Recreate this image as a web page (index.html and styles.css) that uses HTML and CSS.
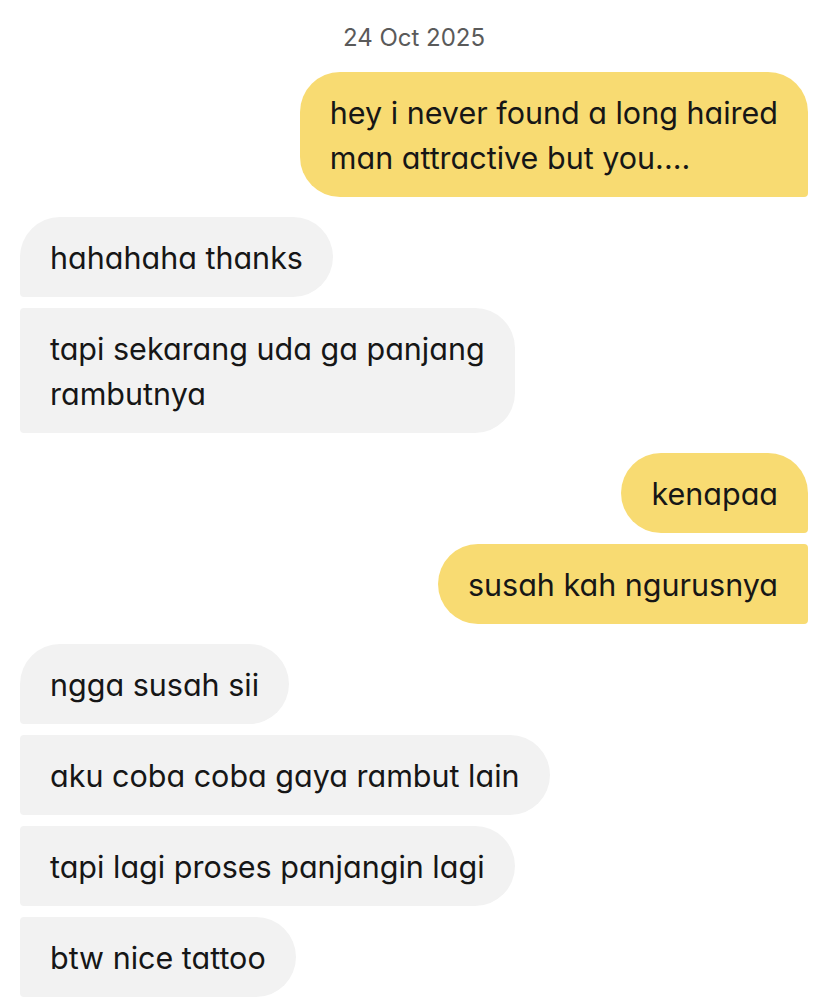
FILE: index.html
```html
<!DOCTYPE html>
<html lang="id">
<head>
<meta charset="utf-8">
<title>Chat</title>
<link rel="stylesheet" href="styles.css">
</head>
<body>
<main class="chat">
  <div class="date">24 Oct 2025</div>

  <div class="group sent">
    <div class="bubble first last">hey i never found a long haired<br>man attractive but you....</div>
  </div>

  <div class="group received">
    <div class="bubble first">hahahaha thanks</div>
    <div class="bubble last">tapi sekarang uda ga panjang<br>rambutnya</div>
  </div>

  <div class="group sent">
    <div class="bubble first">kenapaa</div>
    <div class="bubble last">susah kah ngurusnya</div>
  </div>

  <div class="group received">
    <div class="bubble first">ngga susah sii</div>
    <div class="bubble">aku coba coba gaya rambut lain</div>
    <div class="bubble">tapi lagi proses panjangin lagi</div>
    <div class="bubble last">btw nice tattoo</div>
  </div>
</main>
</body>
</html>
```

FILE: styles.css
```css
html, body {
  margin: 0;
  padding: 0;
  background: #ffffff;
}

.chat {
  font-family: Inter, "Noto Sans", sans-serif;
  font-feature-settings: "cv11" 1;
  color: #161616;
  padding: 0 20px;
  display: flex;
  flex-direction: column;
  gap: 20px;
}

.date {
  text-align: center;
  font-size: 24px;
  color: #5a5a5a;
  padding-top: 24px;
  line-height: 28px;
  margin-bottom: 0;
}

.group {
  display: flex;
  flex-direction: column;
  gap: 11px;
}

.group.sent { align-items: flex-end; }
.group.received { align-items: flex-start; }

.bubble {
  font-size: 30.5px;
  line-height: 45px;
  padding: 17.5px 30px;
  white-space: nowrap;
  width: fit-content;
}

.sent .bubble {
  background: #f8db72;
  border-radius: 40px 4px 4px 40px;
}
.sent .bubble.first { border-top-right-radius: 40px; }

.received .bubble {
  background: #f2f2f2;
  border-radius: 4px 40px 40px 4px;
}
.received .bubble.first { border-top-left-radius: 40px; }
```
